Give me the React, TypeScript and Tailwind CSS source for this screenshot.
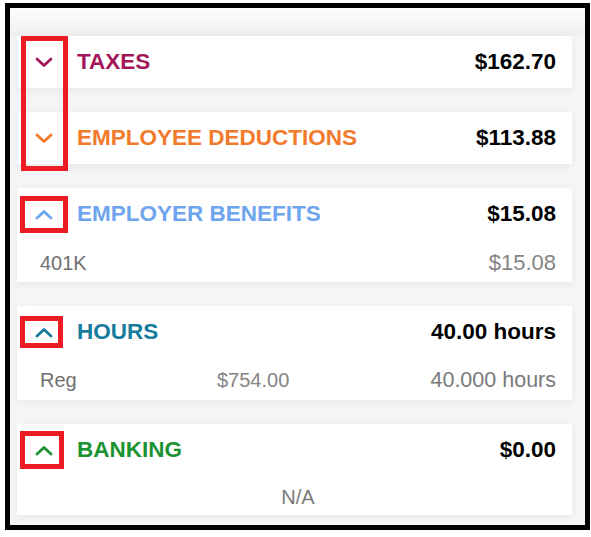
import { type ReactNode } from 'react';

type Section = {
  title: string;
  color: string;
  total: string;
  open: boolean;
  body?: ReactNode;
};

function Chevron({ up, color }: { up: boolean; color: string }) {
  return (
    <svg width="18" height="11" viewBox="0 0 18 11" fill="none" className="shrink-0">
      <polyline
        points={up ? '2,9 9,2.5 16,9' : '2,2 9,8.5 16,2'}
        stroke={color}
        strokeWidth={2.8}
        strokeLinecap="round"
        strokeLinejoin="round"
      />
    </svg>
  );
}

const sections: Section[] = [
  { title: 'TAXES', color: '#a3175a', total: '$162.70', open: false },
  { title: 'EMPLOYEE DEDUCTIONS', color: '#f27a2d', total: '$113.88', open: false },
  {
    title: 'EMPLOYER BENEFITS',
    color: '#6ea5ee',
    total: '$15.08',
    open: true,
    body: (
      <div className="h-[42px] pt-[12px] pl-[23px] pr-[16px] flex items-baseline justify-between">
        <span className="text-[#717171]">401K</span>
        <span className="text-[22px] text-[#858585]">$15.08</span>
      </div>
    ),
  },
  {
    title: 'HOURS',
    color: '#167b9c',
    total: '40.00 hours',
    open: true,
    body: (
      <div className="h-[42px] pt-[12px] pl-[23px] pr-[16px] flex items-baseline">
        <span className="w-[177px] text-[#717171]">Reg</span>
        <span className="text-[#858585]">$754.00</span>
        <span className="ml-auto text-[21.5px] text-[#7a7a7a]">40.000 hours</span>
      </div>
    ),
  },
  {
    title: 'BANKING',
    color: '#1b9332',
    total: '$0.00',
    open: true,
    body: (
      <div className="h-[39px] pt-[3px] pl-[23px] pr-[16px] grid grid-cols-3 items-center">
        <span />
        <span className="text-center text-[#7a7a7a]">N/A</span>
        <span />
      </div>
    ),
  },
];

export default function App() {
  return (
    <div
      className="w-[591px] h-[537px] bg-white pt-[3px] pl-[5px] overflow-hidden"
      style={{ fontFamily: '"Liberation Sans", Arial, sans-serif' }}
    >
      <div className="relative w-[585px] h-[527px] border-[5px] border-black bg-[#f5f5f5]">
        {/* top shade */}
        <div className="absolute inset-x-0 top-0 h-[28px] bg-gradient-to-b from-[#fdfdfd] to-[#efefef]" />

        <div className="relative flex flex-col gap-6 pt-[28px] pl-[7px] pr-[13px]">
          {sections.map((s) => (
            <div key={s.title} className="bg-white shadow-[0_2px_8px_rgba(0,0,0,0.06)]">
              <div className="h-[52px] flex items-center pt-[1px] pl-[18px] pr-[16px]">
                <Chevron up={s.open} color={s.color} />
                <span
                  className="ml-[24px] text-[22.5px] font-bold leading-none"
                  style={{ color: s.color }}
                >
                  {s.title}
                </span>
                <span className="ml-auto text-[22.5px] font-bold leading-none text-black">
                  {s.total}
                </span>
              </div>
              {s.body && <div className="text-[20px] leading-none">{s.body}</div>}
            </div>
          ))}
        </div>

        {/* red annotation boxes */}
        <div className="absolute left-[11px] top-[28px] w-[47px] h-[135px] border-[5px] border-[#ec1c24]" />
        <div className="absolute left-[10px] top-[188px] w-[48px] h-[37px] border-[5px] border-[#ec1c24]" />
        <div className="absolute left-[10px] top-[308px] w-[43px] h-[32px] border-[5px] border-[#ec1c24]" />
        <div className="absolute left-[10px] top-[423px] w-[44px] h-[38px] border-[5px] border-[#ec1c24]" />
      </div>
    </div>
  );
}
